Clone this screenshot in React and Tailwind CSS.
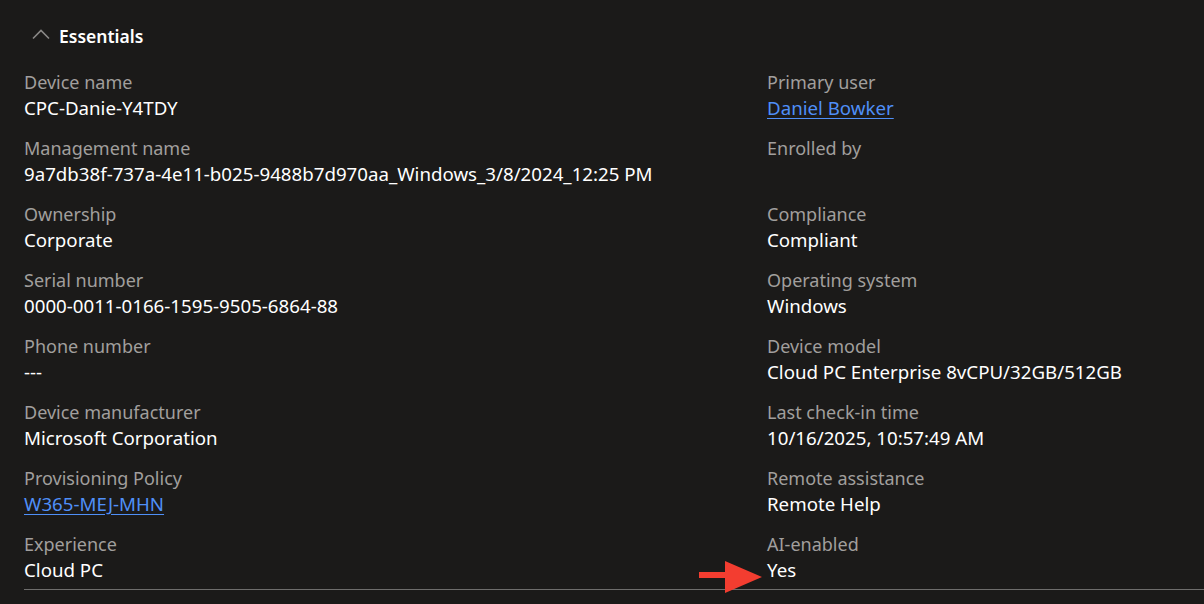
import React from 'react';

const left = [
  { label: 'Device name', value: 'CPC-Danie-Y4TDY' },
  { label: 'Management name', value: '9a7db38f-737a-4e11-b025-9488b7d970aa_Windows_3/8/2024_12:25 PM' },
  { label: 'Ownership', value: 'Corporate' },
  { label: 'Serial number', value: '0000-0011-0166-1595-9505-6864-88' },
  { label: 'Phone number', value: '---' },
  { label: 'Device manufacturer', value: 'Microsoft Corporation' },
  { label: 'Provisioning Policy', value: 'W365-MEJ-MHN', link: true },
  { label: 'Experience', value: 'Cloud PC' },
];

const right = [
  { label: 'Primary user', value: 'Daniel Bowker', link: true },
  { label: 'Enrolled by', value: '' },
  { label: 'Compliance', value: 'Compliant' },
  { label: 'Operating system', value: 'Windows' },
  { label: 'Device model', value: 'Cloud PC Enterprise 8vCPU/32GB/512GB' },
  { label: 'Last check-in time', value: '10/16/2025, 10:57:49 AM' },
  { label: 'Remote assistance', value: 'Remote Help' },
  { label: 'AI-enabled', value: 'Yes', arrow: true },
];

function Field({ label, value, link, arrow }) {
  return (
    <div className="relative mb-[14px]">
      <div className="h-[26px] leading-[26px] text-[#a19f9d]">{label}</div>
      <div className="h-[26px] leading-[26px] text-[18.7px]">
        {link ? (
          <a href="#" className="text-[#4f8ff7] underline underline-offset-[3px]">{value}</a>
        ) : (
          <span className="text-white">{value}</span>
        )}
      </div>
      {arrow && (
        <svg className="absolute left-[-68px] top-[30px]" width="64" height="34" viewBox="0 0 64 34">
          <rect x="0" y="11" width="28" height="6" fill="#f33d30" />
          <polygon points="26,0 63,16 26,32" fill="#f33d30" />
        </svg>
      )}
    </div>
  );
}

export default function App() {
  return (
    <div
      className="w-[1204px] h-[604px] bg-[#1b1a19] overflow-hidden text-[18px]"
      style={{ fontFamily: '"Noto Sans", "Open Sans", sans-serif' }}
    >
      <div className="pl-6">
        <div className="flex items-center h-[26px] mt-[23px] mb-5">
          <svg width="20" height="14" viewBox="0 0 20 14" className="ml-[7px] mr-[8px] mb-[3px]">
            <path d="M2 10.5 L10 2.5 L18 10.5" fill="none" stroke="#8a8886" strokeWidth="1.6" />
          </svg>
          <span className="font-semibold text-white text-[17.5px]">Essentials</span>
        </div>
        <div className="grid grid-cols-[743px_1fr]">
          <div>
            {left.map((f) => (
              <Field key={f.label} {...f} />
            ))}
          </div>
          <div>
            {right.map((f) => (
              <Field key={f.label} {...f} />
            ))}
          </div>
        </div>
        <div className="h-px bg-[#6e6d6c] mt-[-8px]" />
      </div>
    </div>
  );
}
